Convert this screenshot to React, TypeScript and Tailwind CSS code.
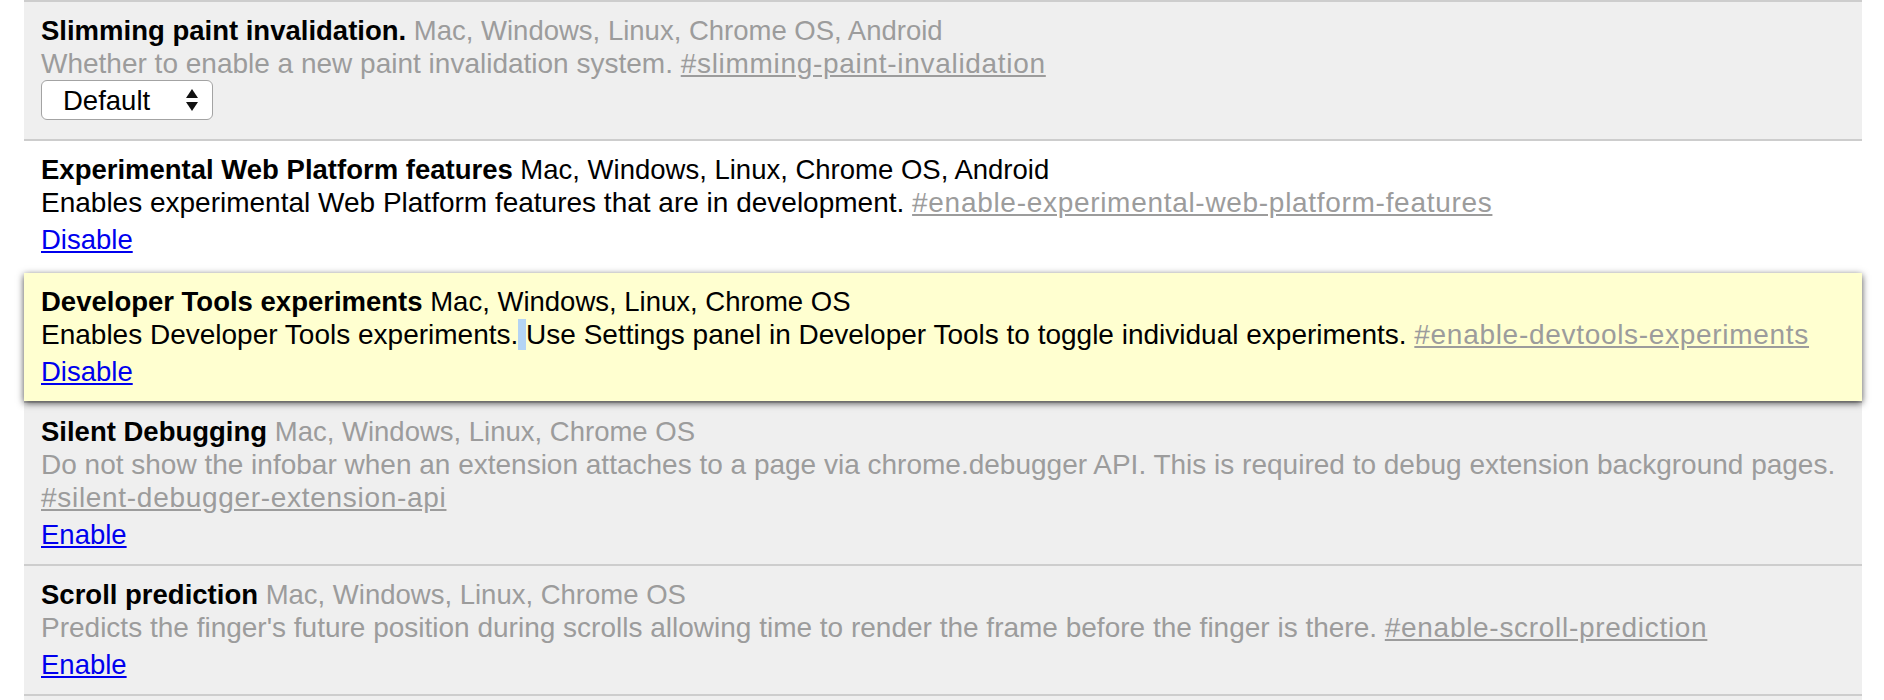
const platforms = "Mac, Windows, Linux, Chrome OS";

const Experiment = ({
  title,
  os,
  desc,
  hash,
  state,
  children,
}: {
  title: string;
  os: string;
  desc: React.ReactNode;
  hash: string;
  state: "off" | "on" | "ref";
  children: React.ReactNode;
}) => {
  const dim = state === "off";
  const box =
    state === "ref"
      ? "bg-[#ffffd0] relative z-10 pb-[13px] shadow-[0_2px_7px_rgba(0,0,0,0.7)]"
      : state === "on"
      ? "bg-white pb-[17px] border-t-2 border-[#cdcdcd]"
      : "bg-[#efefef] pb-[13px] border-t-2 border-[#cdcdcd]";

  return (
    <div className={`px-[17px] pt-3 ${box}`}>
      <div>
        <span className="font-bold text-black">{title}</span>{" "}
        <span className={dim ? "text-[#9c9c9c]" : "text-black"}>{os}</span>
      </div>
      <div className={`text-[28px] ${dim ? "text-[#9c9c9c]" : "text-black"}`}>
        {desc} <a className="underline tracking-[0.7px] text-[#9c9c9c]">{hash}</a>
      </div>
      {children}
    </div>
  );
};

const ActionLink = ({ label }: { label: string }) => (
  <div className="mt-1">
    <a className="text-[#0000ee] underline">{label}</a>
  </div>
);

export default function App() {
  return (
    <div className="min-h-screen bg-white font-['Liberation_Sans',Arial,sans-serif] text-[27.5px] leading-[33px]">
      <div className="ml-[24px] w-[1838px]">
        <Experiment
          title="Slimming paint invalidation."
          os={`${platforms}, Android`}
          desc="Whether to enable a new paint invalidation system."
          hash="#slimming-paint-invalidation"
          state="off"
        >
          <div className="pb-[6px]">
            <div className="flex h-[40px] w-[172px] items-center justify-between rounded-[6px] border border-[#a3a3a3] bg-white pl-[21px] pr-[13px] text-black">
              <span>Default</span>
              <svg width="14" height="24" viewBox="0 0 14 24">
                <path d="M7 1 L13 10 L1 10 Z" fill="#111" />
                <path d="M7 23 L13 14 L1 14 Z" fill="#111" />
              </svg>
            </div>
          </div>
        </Experiment>

        <Experiment
          title="Experimental Web Platform features"
          os={`${platforms}, Android`}
          desc="Enables experimental Web Platform features that are in development."
          hash="#enable-experimental-web-platform-features"
          state="on"
        >
          <ActionLink label="Disable" />
        </Experiment>

        <Experiment
          title="Developer Tools experiments"
          os={platforms}
          desc={
            <>
              Enables Developer Tools experiments.
              <span className="bg-[#b4d4f4]"> </span>Use Settings panel in Developer Tools to toggle individual
              experiments.
            </>
          }
          hash="#enable-devtools-experiments"
          state="ref"
        >
          <ActionLink label="Disable" />
        </Experiment>

        <Experiment
          title="Silent Debugging"
          os={platforms}
          desc="Do not show the infobar when an extension attaches to a page via chrome.debugger API. This is required to debug extension background pages."
          hash="#silent-debugger-extension-api"
          state="off"
        >
          <ActionLink label="Enable" />
        </Experiment>

        <Experiment
          title="Scroll prediction"
          os={platforms}
          desc="Predicts the finger's future position during scrolls allowing time to render the frame before the finger is there."
          hash="#enable-scroll-prediction"
          state="off"
        >
          <ActionLink label="Enable" />
        </Experiment>

        <div className="h-[40px] border-t-2 border-[#cdcdcd] bg-[#efefef]" />
      </div>
    </div>
  );
}
